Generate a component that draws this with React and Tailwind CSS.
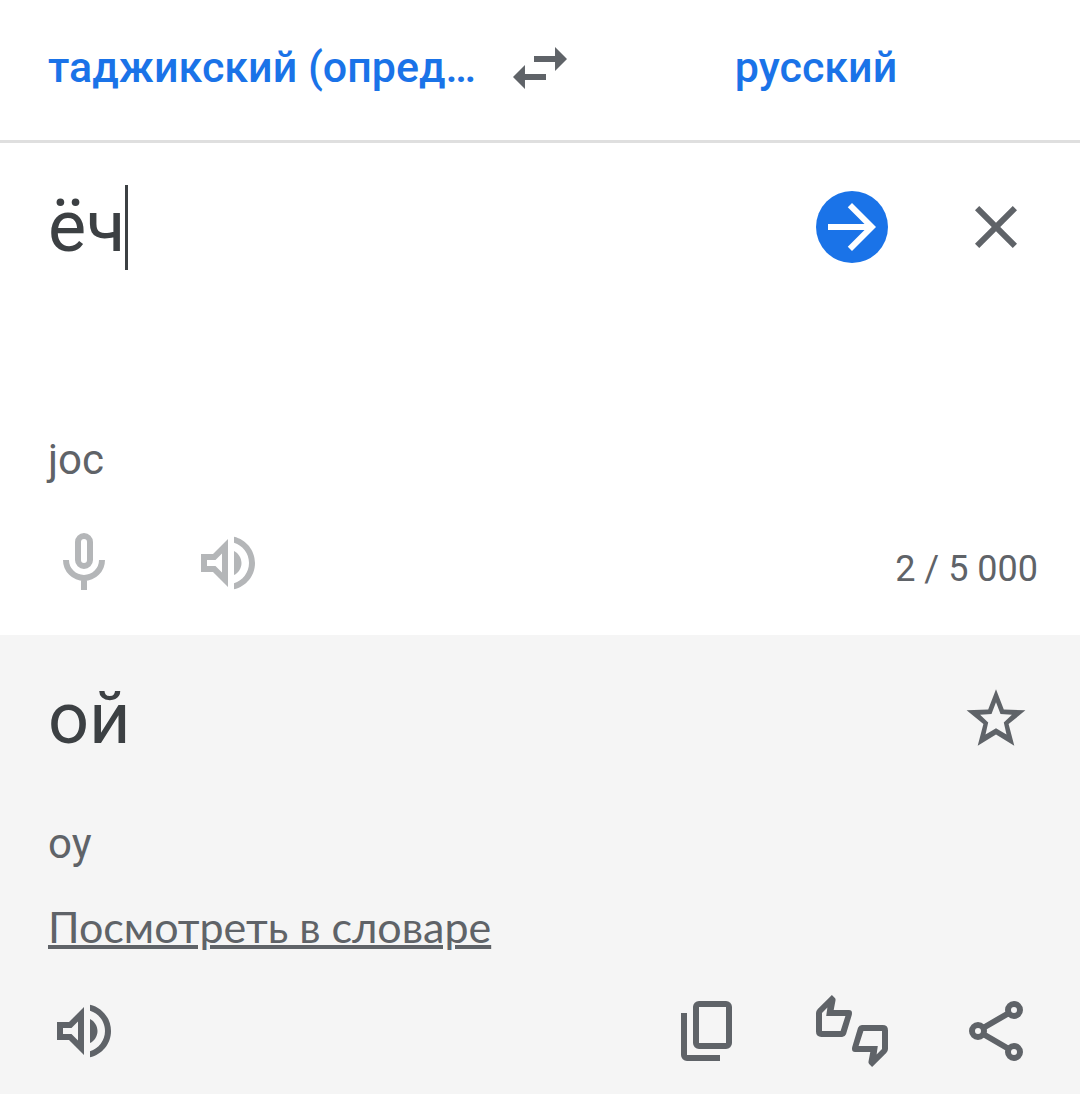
import React, { useState } from 'react';

const Icon = ({ children, className = 'fill-current' }) => (
  <svg viewBox="0 0 24 24" className={`size-[72px] shrink-0 ${className}`} aria-hidden="true">
    {children}
  </svg>
);

const IconButton = ({ label, className = '', children }) => (
  <button type="button" aria-label={label} className={`size-[72px] shrink-0 ${className}`}>
    {children}
  </button>
);

const SpeakerIcon = () => (
  <Icon>
    <path d="M3 9v6h4l5 5V4L7 9H3zm7-.17v6.34L7.83 13H5v-2h2.83L10 8.83zM16.5 12c0-1.77-1.02-3.29-2.5-4.03v8.05c1.48-.73 2.5-2.25 2.5-4.02zM14 3.23v2.06c2.89.86 5 3.54 5 6.71s-2.11 5.85-5 6.71v2.06c4.01-.91 7-4.49 7-8.77s-2.99-7.86-7-8.77z" />
  </Icon>
);

const MicIcon = () => (
  <Icon className="fill-none stroke-current stroke-2">
    <rect x="10" y="3" width="4" height="10" rx="2" />
    <path d="M6 11a6 6 0 0 0 12 0M12 17v4" />
  </Icon>
);

const StarIcon = () => (
  <Icon>
    <path
      fillRule="evenodd"
      d="M12 2.1 14.6 8.8 21.8 9.1 16.2 13.7 18.1 20.9 12 17.2 5.9 20.9 7.8 13.7 2.2 9.1 9.4 8.8zM12 6.4 10.5 10.3 6.7 10.6 9.4 13.2 8.5 17.2 12 15.1 15.5 17.2 14.6 13.2 17.3 10.6 13.5 10.3z"
    />
  </Icon>
);

const CopyIcon = () => (
  <Icon className="fill-none stroke-current stroke-2">
    <rect x="8" y="3" width="11" height="14" rx="1" />
    <path d="M4 6v14a1 1 0 0 0 1 1h11" />
  </Icon>
);

const thumb =
  'M5.3 0 .6 4.7Q0 5.3 0 6v6.2Q0 14 1.8 14h6.9q.9 0 1.3-.9l1.8-6Q12 6.6 12 6 12 5 11 5H5.9l.6-3.2q.1-.5-.2-.8zM3.8 4.2 3.4 7h6.4l-1.6 5H2V6z';

const RateIcon = () => (
  <Icon>
    <path fillRule="evenodd" d={thumb} />
    <path fillRule="evenodd" d={thumb} transform="rotate(180 12 12)" />
  </Icon>
);

const ShareIcon = () => (
  <Icon className="fill-none stroke-current stroke-2">
    <circle cx="6" cy="12" r="2" />
    <circle cx="18" cy="5" r="2" />
    <circle cx="18" cy="19" r="2" />
    <path d="M7.7 11 16.3 6M7.7 13l8.6 5" />
  </Icon>
);

const LanguageBar = () => (
  <header className="grid grid-cols-[1fr_72px_1fr] items-center border-b-3 border-[#dfdfdf] px-6 pt-8 pb-9">
    <button type="button" className="truncate px-6 pb-0.5 text-left text-[43px] leading-[64px] font-medium text-[#1a73e8]">
      таджикский (опред…
    </button>
    <IconButton label="Поменять языки местами">
      <Icon>
        <path d="M6.99 11 3 15l3.99 4v-3H14v-2H6.99v-3zM21 9l-3.99-4v3H10v2h7.01v3L21 9z" />
      </Icon>
    </IconButton>
    <button type="button" className="truncate px-6 pb-0.5 text-center text-[43px] leading-[64px] font-medium text-[#1a73e8]">
      русский
    </button>
  </header>
);

const SourcePanel = () => {
  const [text, setText] = useState('ёч');

  return (
    <section className="pt-9 pb-9">
      <div className="flex min-h-[248px] items-start pr-12 pl-12">
        <div className="flex min-w-0 flex-1 items-center">
          <textarea
            aria-label="Исходный текст"
            rows={1}
            value={text}
            onChange={(e) => setText(e.target.value)}
            className="block max-w-full resize-none overflow-hidden text-[72px] leading-[96px] text-[#3c4043] caret-transparent outline-none [field-sizing:content]"
          />
          <span className="h-[85px] w-[3px] shrink-0 bg-[#3c4043]" />
        </div>
        <div className="flex gap-[72px] pt-3">
          <IconButton label="Перевести" className="rounded-full bg-[#1a73e8] text-white">
            <Icon>
              <path d="m12 4-1.41 1.41L16.17 11H4v2h12.17l-5.58 5.59L12 20l8-8z" />
            </Icon>
          </IconButton>
          <IconButton label="Очистить">
            <Icon>
              <path d="M19 6.41 17.59 5 12 10.59 6.41 5 5 6.41 10.59 12 5 17.59 6.41 19 12 13.41 17.59 19 19 17.59 13.41 12z" />
            </Icon>
          </IconButton>
        </div>
      </div>
      <p className="px-12 text-[42px] leading-[66px]">joc</p>
      <div className="mt-[34px] flex items-end justify-between pr-[42px] pl-12">
        <div className="flex gap-[72px] text-[#b4b6b8]">
          <IconButton label="Голосовой ввод">
            <MicIcon />
          </IconButton>
          <IconButton label="Прослушать">
            <SpeakerIcon />
          </IconButton>
        </div>
        <span className="pb-1.5 text-[36px] leading-[48px]">2 / 5 000</span>
      </div>
    </section>
  );
};

const ResultPanel = () => (
  <section className="bg-[#f5f5f5] px-12 pt-9 pb-[27px]">
    <div className="flex items-center justify-between">
      <p className="text-[72px] leading-[96px] text-[#3c4043]">ой</p>
      <IconButton label="Сохранить перевод">
        <StarIcon />
      </IconButton>
    </div>
    <p className="mt-11 text-[42px] leading-[66px]">oy</p>
    <a
      href="#dictionary"
      className="mt-[18px] inline-block font-['Lato',sans-serif] text-[43px] leading-[64px] underline decoration-4"
    >
      Посмотреть в словаре
    </a>
    <div className="mt-9 flex justify-between">
      <IconButton label="Прослушать перевод">
        <SpeakerIcon />
      </IconButton>
      <div className="flex gap-[72px]">
        <IconButton label="Копировать">
          <CopyIcon />
        </IconButton>
        <IconButton label="Оценить перевод">
          <RateIcon />
        </IconButton>
        <IconButton label="Поделиться">
          <ShareIcon />
        </IconButton>
      </div>
    </div>
  </section>
);

const App = () => (
  <main className="bg-white font-['Roboto',sans-serif] text-[#5f6368]">
    <LanguageBar />
    <SourcePanel />
    <ResultPanel />
  </main>
);

export default App;
